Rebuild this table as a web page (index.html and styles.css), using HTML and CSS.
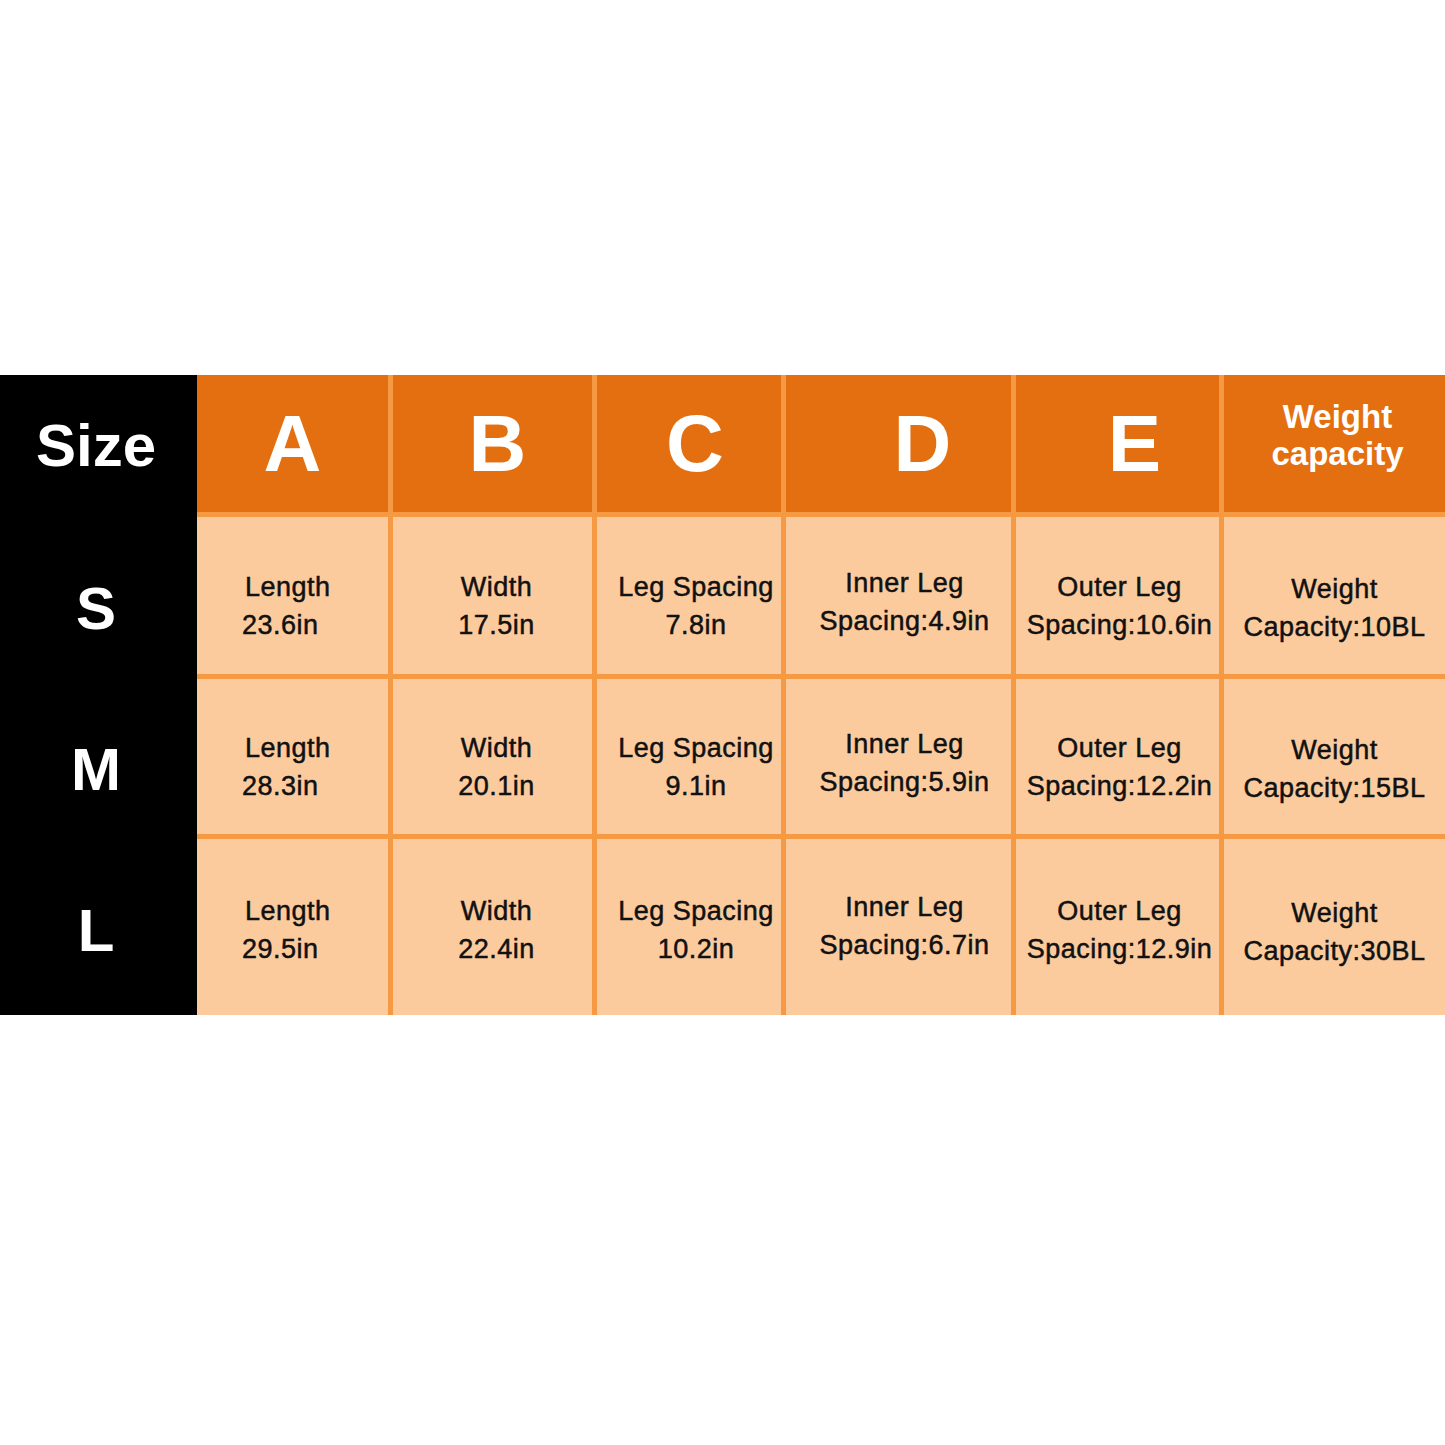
FILE: index.html
```html
<!DOCTYPE html>
<html lang="en">
<head>
<meta charset="utf-8">
<title>Size chart</title>
<link rel="stylesheet" href="styles.css">
</head>
<body>
<div class="page">
  <div class="chart">
    <div class="side side-head">Size</div>
    <div class="hd ca">A</div>
    <div class="hd cb">B</div>
    <div class="hd cc">C</div>
    <div class="hd cd">D</div>
    <div class="hd ce">E</div>
    <div class="hd cf hd-small">Weight<br>capacity</div>

    <div class="side r-s">S</div>
    <div class="cell r-s ca"><div class="txt"><span class="first">Length</span><br>23.6in</div></div>
    <div class="cell r-s cb"><div class="txt">Width<br>17.5in</div></div>
    <div class="cell r-s cc"><div class="txt">Leg Spacing<br>7.8in</div></div>
    <div class="cell r-s cd"><div class="txt">Inner Leg<br>Spacing:4.9in</div></div>
    <div class="cell r-s ce"><div class="txt">Outer Leg<br>Spacing:10.6in</div></div>
    <div class="cell r-s cf"><div class="txt">Weight<br>Capacity:10BL</div></div>

    <div class="side r-m">M</div>
    <div class="cell r-m ca"><div class="txt"><span class="first">Length</span><br>28.3in</div></div>
    <div class="cell r-m cb"><div class="txt">Width<br>20.1in</div></div>
    <div class="cell r-m cc"><div class="txt">Leg Spacing<br>9.1in</div></div>
    <div class="cell r-m cd"><div class="txt">Inner Leg<br>Spacing:5.9in</div></div>
    <div class="cell r-m ce"><div class="txt">Outer Leg<br>Spacing:12.2in</div></div>
    <div class="cell r-m cf"><div class="txt">Weight<br>Capacity:15BL</div></div>

    <div class="side r-l">L</div>
    <div class="cell r-l ca last"><div class="txt"><span class="first">Length</span><br>29.5in</div></div>
    <div class="cell r-l cb last"><div class="txt">Width<br>22.4in</div></div>
    <div class="cell r-l cc last"><div class="txt">Leg Spacing<br>10.2in</div></div>
    <div class="cell r-l cd last"><div class="txt">Inner Leg<br>Spacing:6.7in</div></div>
    <div class="cell r-l ce last"><div class="txt">Outer Leg<br>Spacing:12.9in</div></div>
    <div class="cell r-l cf last"><div class="txt">Weight<br>Capacity:30BL</div></div>
  </div>
</div>
</body>
</html>
```

FILE: styles.css
```css
html, body {
  margin: 0;
  padding: 0;
  background: #ffffff;
}

.page {
  width: 1445px;
  height: 1445px;
  padding-top: 375px;
  box-sizing: border-box;
  font-family: "Liberation Sans", Arial, sans-serif;
}

.chart {
  display: grid;
  grid-template-columns: 197px 196px 204px 189px 230px 208px 221px;
  grid-template-rows: 142px 162px 160px 176px;
}

.side {
  background: #000000;
  color: #ffffff;
  font-weight: bold;
  font-size: 60px;
  display: flex;
  align-items: center;
  justify-content: center;
  padding-right: 5px;
  box-sizing: border-box;
}

.side-head {
  padding-bottom: 2px;
}

.hd {
  background: #e46f10;
  color: #ffffff;
  font-weight: bold;
  font-size: 80px;
  display: flex;
  align-items: center;
  justify-content: center;
  text-align: center;
  border-right: 5px solid #f59a42;
  border-bottom: 5px solid #f59a42;
  box-sizing: border-box;
}

.hd-small {
  font-size: 33px;
  line-height: 37px;
  border-right: none;
  padding-bottom: 18px;
}

.cell {
  background: #fbcb9e;
  color: #111111;
  font-size: 27px;
  letter-spacing: 0.5px;
  line-height: 38px;
  -webkit-text-stroke: 0.5px #111111;
  white-space: nowrap;
  display: flex;
  align-items: center;
  justify-content: center;
  text-align: center;
  border-right: 5px solid #f59a42;
  border-bottom: 5px solid #f59a42;
  box-sizing: border-box;
}

.txt {
  display: block;
}

.cell.cf {
  border-right: none;
}

.cell.last {
  border-bottom: none;
}

.r-s, .r-m {
  padding-top: 20px;
}

.r-l {
  padding-top: 6px;
}

/* column alignments */
.cell.ca {
  justify-content: flex-start;
  text-align: left;
  padding-left: 45px;
}

.first {
  padding-left: 3px;
}

.cell.cb { padding-left: 8px; }
.cell.cc { padding-left: 14px; }
.cell.cd { padding-left: 12px; padding-bottom: 8px; }
.cell.ce { padding-left: 4px; }
.cell.cf { padding-bottom: 0; padding-top: 24px; }
.cell.cf.r-l { padding-top: 10px; }

.hd.cb { padding-left: 10px; }
.hd.cc { padding-left: 12px; }
.hd.cd { padding-left: 48px; }
.hd.ce { padding-left: 34px; }
.hd.cf { padding-left: 6px; }
```
